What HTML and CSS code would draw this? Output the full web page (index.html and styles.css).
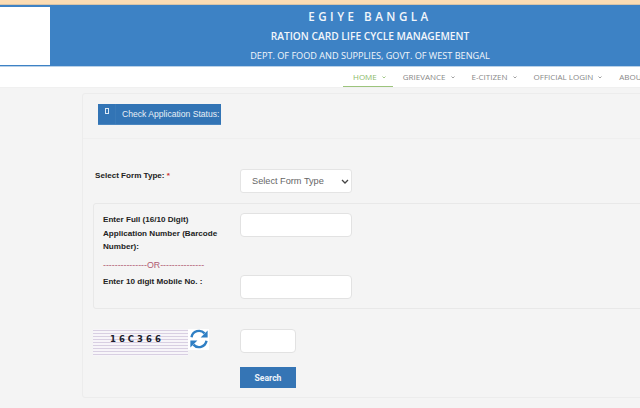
FILE: index.html
```html
<!DOCTYPE html>
<html lang="en">
<head>
<meta charset="utf-8">
<title>Egiye Bangla</title>
<link rel="stylesheet" href="styles.css">
</head>
<body>
<div class="topstrip"></div>
<header class="banner">
  <div class="logo-box"></div>
  <div class="titles">
    <div class="t1">EGIYE BANGLA</div>
    <div class="t2">RATION CARD LIFE CYCLE MANAGEMENT</div>
    <div class="t3">DEPT. OF FOOD AND SUPPLIES, GOVT. OF WEST BENGAL</div>
  </div>
</header>
<nav class="nav">
  <a class="item active">HOME<svg class="car" width="4" height="3" viewBox="0 0 4 3"><path d="M.5.5L2 2 3.5.5" fill="none" stroke="currentColor" stroke-width=".8"/></svg></a>
  <a class="item">GRIEVANCE<svg class="car" width="4" height="3" viewBox="0 0 4 3"><path d="M.5.5L2 2 3.5.5" fill="none" stroke="currentColor" stroke-width=".8"/></svg></a>
  <a class="item">E-CITIZEN<svg class="car" width="4" height="3" viewBox="0 0 4 3"><path d="M.5.5L2 2 3.5.5" fill="none" stroke="currentColor" stroke-width=".8"/></svg></a>
  <a class="item">OFFICIAL LOGIN<svg class="car" width="4" height="3" viewBox="0 0 4 3"><path d="M.5.5L2 2 3.5.5" fill="none" stroke="currentColor" stroke-width=".8"/></svg></a>
  <a class="item">ABOUT<svg class="car" width="4" height="3" viewBox="0 0 4 3"><path d="M.5.5L2 2 3.5.5" fill="none" stroke="currentColor" stroke-width=".8"/></svg></a>
</nav>
<main class="panel">
  <div class="status"><span class="st-icon"><span class="glyph"></span></span><span class="st-text">Check Application Status:</span></div>
  <hr class="rule">
  <div class="row form-type">
    <label class="lab">Select Form Type: <span class="req">*</span></label>
    <div class="fake-select"><span>Select Form Type</span>
      <svg class="chev" width="8" height="5" viewBox="0 0 8 5"><path d="M1 1l3 3 3-3" fill="none" stroke="#444" stroke-width="1.3"/></svg>
    </div>
  </div>
  <section class="well">
    <div class="row r1">
      <label class="lab2">Enter Full (16/10 Digit) Application Number (Barcode Number):</label>
      <div class="input"></div>
    </div>
    <div class="or">---------------OR---------------</div>
    <div class="row r2">
      <label class="lab2">Enter 10 digit Mobile No. :</label>
      <div class="input"></div>
    </div>
  </section>
  <div class="row captcha-row">
    <div class="captcha-wrap">
      <div class="captcha"><span>16C366</span></div>
      <div class="refresh-box">
      <svg class="refresh" width="20" height="20" viewBox="0 0 20 20">
        <path d="M2.5 8.2A7.6 7.6 0 0 1 15.6 4.4" fill="none" stroke="#2f7fc4" stroke-width="2.4"/>
        <path d="M17.5 11.8A7.6 7.6 0 0 1 4.4 15.6" fill="none" stroke="#2f7fc4" stroke-width="2.4"/>
        <path d="M18.6 1.5v7h-7z" fill="#2f7fc4"/>
        <path d="M1.4 18.5v-7h7z" fill="#2f7fc4"/>
      </svg>
      </div>
    </div>
    <div class="input small"></div>
  </div>
  <button class="search">Search</button>
</main>
</body>
</html>
```
FILE: styles.css
```css
* { box-sizing: border-box; }
html, body { margin: 0; height: 408px; overflow: hidden; }
body { background: #f4f4f4; font-family: "Liberation Sans", Arial, sans-serif; color: #222; }
.topstrip { height: 5px; background: #fbdcb4; border-bottom: 1px solid #d8c4a8; }
.banner { height: 62px; background: #3d82c5; display: flex; align-items: center; border-bottom: 1px solid #b9d1e8; overflow: hidden; }
.logo-box { width: 50px; height: 58px; background: #fff; flex: none; }
.titles { flex: none; width: 640px; margin-left: -50px; text-align: center; color: #f2f6fb; font-family: "Open Sans", sans-serif; padding-left: 100px; position: relative; }
.t1 { font-size: 11.6px; font-weight: 600; letter-spacing: 3.5px; line-height: 18px; height: 18px; margin-top: 1px; }
.t2 { font-size: 10.2px; font-weight: 600; line-height: 18px; height: 18px; margin-top: 1px; }
.t3 { font-size: 9.15px; line-height: 18px; height: 18px; margin-top: 2px; }
.nav { height: 21px; background: #fff; display: flex; padding-left: 343px; border-bottom: 1px solid #f0f0f0; white-space: nowrap; overflow: hidden; }
.item { font-family: "Open Sans", sans-serif; font-size: 8px; color: #888; padding: 0 7px 0 10px; line-height: 19px; height: 21px; flex: none; }
.item.active { color: #8cba6a; border-bottom: 2px solid #9cc47c; }
.car { margin-left: 5px; vertical-align: 1px; }
.panel { margin: 5px 0 0 82px; width: 570px; height: 305px; border: 1px solid #ececec; border-radius: 3px; padding: 10px 0 0 15px; }
.status { width: 123px; height: 21px; background: #3274b5; color: #e8eff6; display: flex; align-items: center; font-size: 8.6px; border-bottom: 1px solid #4a86c0; }
.st-icon { width: 18px; height: 100%; display: flex; justify-content: center; padding-top: 4px; border-right: 1px solid #3a7ab8; flex: none; }
.glyph { width: 4px; height: 6px; border: 1px solid #dce8f4; }
.st-text { margin-left: 6px; white-space: nowrap; }
.rule { border: 0; border-top: 1px solid #efefef; margin: 13px 0 0 -15px; }
.row { display: flex; }
.form-type { margin: 30px 0 0 -3px; }
.lab { width: 145px; font-size: 8.1px; font-weight: 700; color: #222; padding-top: 1px; line-height: 12px; }
.req { color: #c33; }
.fake-select { width: 112px; height: 24px; background: #fff; border: 1px solid #e4e4e4; border-radius: 3px; font-size: 9.2px; color: #666; display: flex; align-items: center; justify-content: space-between; padding: 0 2px 0 11px; }
.well { margin: 10px 0 0 -5px; width: 560px; height: 106px; border: 1px solid #e8e8e8; border-radius: 3px; padding: 9px 0 0 9px; }
.lab2 { width: 137px; font-size: 8.1px; font-weight: 700; line-height: 13.5px; color: #222; padding: 0 17px 0 0; }
.input { width: 112px; height: 24px; background: #fff; border: 1px solid #e2e2e2; border-radius: 4px; }
.r1 { height: 45px; }
.or { font-size: 8.8px; color: #b05a72; line-height: 12px; margin-top: 1px; white-space: nowrap; }
.r2 { margin-top: 4px; }
.captcha-row { margin: 20px 0 0 -5px; }
.captcha-wrap { width: 147px; display: flex; align-items: flex-start; }
.captcha { width: 95px; height: 27px; background: radial-gradient(circle, #d8cfe2 0.7px, transparent 0.8px) 0 0 / 2px 3px, #f7f5f9; font-family: "DejaVu Sans", sans-serif; font-size: 8.5px; font-weight: 700; letter-spacing: 3px; color: #1c1c2c; padding: 5px 0 0 17px; line-height: 10px; white-space: nowrap; }
.refresh-box { width: 21px; height: 21px; background: #fff; padding: 0 0 0 1px; }
.input.small { width: 56px; height: 24px; }
.search { display: block; margin: 11px 0 0 142px; width: 56px; height: 21px; background: #3575b5; color: #eef3f9; border: 0; font-family: "Roboto", sans-serif; font-size: 8.6px; font-weight: 700; padding: 0; }
```
